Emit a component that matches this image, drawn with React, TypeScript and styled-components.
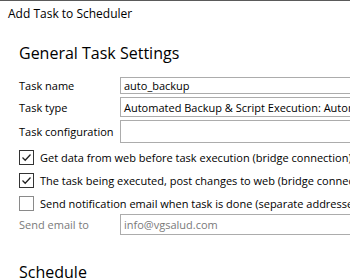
import styled, { createGlobalStyle } from "styled-components";

const GlobalStyle = createGlobalStyle`
  html, body {
    margin: 0;
    padding: 0;
    background: #ffffff;
  }
  body {
    font-family: "Open Sans", "Noto Sans", sans-serif;
    font-size: 11px;
    color: #000000;
    overflow: hidden;
  }
`;

const Window = styled.div`
  width: 350px;
  height: 280px;
  overflow: hidden;
  border-top: 1px solid #5a5a5a;
  box-sizing: border-box;
  display: flex;
  flex-direction: column;
`;

const TitleBar = styled.div`
  height: 25px;
  flex-shrink: 0;
  padding: 0 8px;
  display: flex;
  align-items: center;
  font-size: 12px;
  white-space: nowrap;
`;

const Content = styled.div`
  flex-shrink: 0;
  padding: 15px 0 0 19px;
  display: flex;
  flex-direction: column;
`;

const SectionTitle = styled.h2<{ $top?: number }>`
  margin: ${({ $top }) => $top ?? 0}px 0 0 0;
  font-size: 16px;
  font-weight: 400;
  line-height: 24px;
  white-space: nowrap;
`;

const FormGrid = styled.div<{ $top: number }>`
  display: grid;
  grid-template-columns: 101px 260px;
  row-gap: 3px;
  margin-top: ${({ $top }) => $top}px;
  align-items: center;
`;

const Label = styled.label<{ $muted?: boolean }>`
  white-space: nowrap;
  color: ${({ $muted }) => ($muted ? "#7a7a7a" : "#000000")};
`;

const Field = styled.div<{ $height: number; $muted?: boolean }>`
  height: ${({ $height }) => $height}px;
  box-sizing: border-box;
  border: 1px solid #acacac;
  padding: 0 3px;
  display: flex;
  align-items: center;
  white-space: nowrap;
  overflow: hidden;
  color: ${({ $muted }) => ($muted ? "#7a7a7a" : "#000000")};
`;

const CheckList = styled.div`
  display: flex;
  flex-direction: column;
  gap: 8px;
  margin-top: 7px;
`;

const CheckRow = styled.label`
  height: 15px;
  display: flex;
  align-items: center;
  gap: 6px;
  white-space: nowrap;
`;

const Box = styled.span<{ $checked?: boolean }>`
  width: 15px;
  height: 15px;
  box-sizing: border-box;
  border: 1px solid ${({ $checked }) => ($checked ? "#333333" : "#8a8a8a")};
  display: flex;
  align-items: center;
  justify-content: center;
  flex-shrink: 0;
`;

const Check = () => (
  <svg width="11" height="11" viewBox="0 0 11 11">
    <path d="M1.5 5.5 L4.2 8.2 L9.5 2.5" fill="none" stroke="#222" strokeWidth="1.3" />
  </svg>
);

export default function App() {
  return (
    <>
      <GlobalStyle />
      <Window>
        <TitleBar>Add Task to Scheduler</TitleBar>
        <Content>
          <SectionTitle>General Task Settings</SectionTitle>
          <FormGrid $top={12}>
            <Label>Task name</Label>
            <Field $height={17}>auto_backup</Field>
            <Label>Task type</Label>
            <Field $height={20}>Automated Backup &amp; Script Execution: Automatic</Field>
            <Label>Task configuration</Label>
            <Field $height={23}></Field>
          </FormGrid>
          <CheckList>
            <CheckRow>
              <Box $checked>
                <Check />
              </Box>
              Get data from web before task execution (bridge connection)
            </CheckRow>
            <CheckRow>
              <Box $checked>
                <Check />
              </Box>
              The task being executed, post changes to web (bridge connection)
            </CheckRow>
            <CheckRow>
              <Box />
              Send notification email when task is done (separate addresses)
            </CheckRow>
          </CheckList>
          <FormGrid $top={3}>
            <Label $muted>Send email to</Label>
            <Field $height={21} $muted>info@vgsalud.com</Field>
          </FormGrid>
          <SectionTitle $top={25}>Schedule</SectionTitle>
        </Content>
      </Window>
    </>
  );
}
